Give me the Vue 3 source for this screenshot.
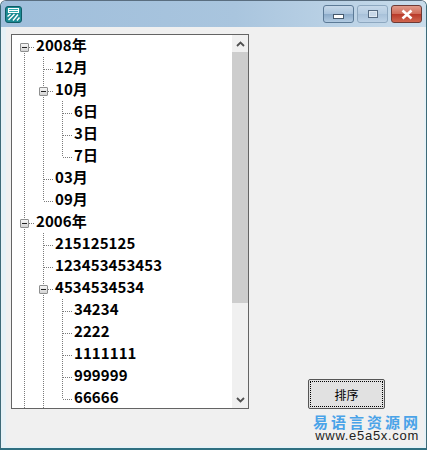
<template>
  <div class="window">
    <!-- Title bar -->
    <div class="titlebar">
      <svg class="app-icon" width="17" height="17" viewBox="0 0 17 17">
        <rect x="0.5" y="0.5" width="16" height="16" rx="2.5" fill="#1c8b93" stroke="#0f5c66" />
        <path d="M3.5 2.5h10v4h-10zM3.5 4.5h10" fill="#35a9ad" stroke="#fff" stroke-width="1.1" />
        <path d="M2.5 10.5l3-2.5M3.5 14l6-6M8 14.5l5-6M12 14.5l2.5-3" fill="none" stroke="#fff" stroke-width="1.4" />
      </svg>
      <div class="caption-btns">
        <div class="cap-btn">
          <span class="min-glyph"></span>
        </div>
        <div class="cap-btn muted">
          <span class="max-glyph"></span>
        </div>
        <div class="cap-btn close">
          <svg width="14" height="11" viewBox="0 0 14 11">
            <path d="M2.5 1.5L11.5 9.5M11.5 1.5L2.5 9.5" stroke="#fff" stroke-width="2.6" />
          </svg>
        </div>
      </div>
    </div>

    <!-- Client area -->
    <div class="client">
      <div class="left-col">
        <div class="tree">
          <div class="tree-rows">
            <div v-for="(row, i) in rows" :key="i" class="row">
              <span v-for="(g, j) in row.guides" :key="j" class="cell" :class="g">
                <span v-if="j === row.guides.length - 1 && row.open" class="toggle"></span>
              </span>
              <span v-if="row.text" class="label">{{ row.text }}</span>
            </div>
          </div>
          <div class="scrollbar">
            <div class="arrow">
              <svg width="9" height="6" viewBox="0 0 9 6"><path d="M1 5L4.5 1.5L8 5" fill="none" stroke="#505050" stroke-width="1.8" /></svg>
            </div>
            <div class="track">
              <div class="thumb"></div>
            </div>
            <div class="arrow">
              <svg width="9" height="6" viewBox="0 0 9 6"><path d="M1 1L4.5 4.5L8 1" fill="none" stroke="#505050" stroke-width="1.8" /></svg>
            </div>
          </div>
        </div>
      </div>
      <div class="right-col">
        <button class="sort-btn"><span class="focus-ring">排序</span></button>
        <div class="brand">
          <div class="brand-cn">易语言资源网</div>
          <div class="brand-url">www.e5a5x.com</div>
        </div>
      </div>
    </div>
  </div>
</template>

<script setup>
// guides: one entry per indent level, the last one holds the connector
const rows = [
  { text: '2008年', guides: ['tee-root'], open: true },
  { text: '12月', guides: ['pass', 'tee'] },
  { text: '10月', guides: ['pass', 'tee'], open: true },
  { text: '6日', guides: ['pass', 'pass', 'tee'] },
  { text: '3日', guides: ['pass', 'pass', 'tee'] },
  { text: '7日', guides: ['pass', 'pass', 'end'] },
  { text: '03月', guides: ['pass', 'tee'] },
  { text: '09月', guides: ['pass', 'end'] },
  { text: '2006年', guides: ['tee'], open: true },
  { text: '215125125', guides: ['pass', 'tee'] },
  { text: '123453453453', guides: ['pass', 'tee'] },
  { text: '4534534534', guides: ['pass', 'tee'], open: true },
  { text: '34234', guides: ['pass', 'pass', 'tee'] },
  { text: '2222', guides: ['pass', 'pass', 'tee'] },
  { text: '1111111', guides: ['pass', 'pass', 'tee'] },
  { text: '999999', guides: ['pass', 'pass', 'tee'] },
  { text: '66666', guides: ['pass', 'pass', 'end'] },
  { text: '', guides: ['pass', 'pass'] },
];
</script>

<style>
html, body {
  margin: 0;
  overflow: hidden;
}
</style>

<style scoped>
.window {
  width: 427px;
  height: 450px;
  box-sizing: border-box;
  display: flex;
  flex-direction: column;
  padding: 0 2px 2px 5px;
  border: 1px solid #3d6a78;
  border-top-color: #5a6e80;
  border-bottom: 2px solid #2f6f80;
  border-radius: 6px 6px 0 0;
  background: #e6f1f6;
  overflow: hidden;
}

.titlebar {
  height: 26px;
  flex: none;
  display: flex;
  align-items: flex-start;
  justify-content: space-between;
  margin: 0 -2px 0 -5px;
  padding: 0 4px 0 4px;
  background: linear-gradient(90deg, #9fbedb 0%, #a9c5de 55%, #c9dceb 100%);
}

.app-icon {
  margin-top: 5px;
}

.caption-btns {
  display: flex;
  gap: 3px;
}

.cap-btn {
  width: 31px;
  height: 18px;
  box-sizing: border-box;
  margin-top: 4px;
  display: flex;
  align-items: center;
  justify-content: center;
  border: 1px solid #5c7a96;
  border-radius: 3px;
  background: linear-gradient(180deg, #c6d8e9 0%, #a9c3dc 50%, #8cabc9 52%, #b2cbe2 100%);
}

.cap-btn.muted {
  border-color: #8ea8c0;
  background: linear-gradient(180deg, #c6d8e9 0%, #b4cbe0 50%, #a8c1d9 52%, #bdd2e6 100%);
}

.cap-btn.close {
  border-color: #6d3a35;
  background: linear-gradient(180deg, #e09a8a 0%, #cf6a57 50%, #b93a2a 52%, #d0664f 100%);
}

.min-glyph {
  width: 9px;
  height: 3px;
  margin-top: 5px;
  background: #fff;
  border: 1px solid #44586c;
}

.max-glyph {
  width: 10px;
  height: 8px;
  box-sizing: border-box;
  border: 1px solid #556a80;
  background: #c8d8e8;
  box-shadow: inset 0 0 0 1px #dfe9f2;
}

.client {
  flex: 1;
  display: flex;
  min-height: 0;
  background: #f0f0f0;
  font-family: "Noto Sans CJK SC", "Noto Sans", sans-serif;
}

.left-col {
  padding: 7px 0 0 5px;
}

.tree {
  width: 238px;
  height: 375px;
  box-sizing: border-box;
  display: flex;
  background: #fff;
  border: 1px solid #646464;
  overflow: hidden;
}

.tree-rows {
  width: 220px;
  box-sizing: border-box;
  flex: none;
  padding: 0 0 0 3px;
  overflow: hidden;
}

.row {
  height: 22px;
  display: flex;
  align-items: flex-start;
  white-space: nowrap;
}

.cell {
  position: relative;
  width: 19px;
  height: 22px;
  flex: none;
}

/* dotted guide lines */
.pass::before,
.tee::before,
.end::before,
.tee-root::before {
  content: "";
  position: absolute;
  left: 9px;
  top: 0;
  bottom: 0;
  width: 1px;
  background: repeating-linear-gradient(180deg, #7a7a7a 0 1px, transparent 1px 2px);
}

.end::before {
  bottom: 10px;
}

.tee-root::before {
  top: 12px;
}

.tee::after,
.end::after,
.tee-root::after {
  content: "";
  position: absolute;
  left: 10px;
  width: 9px;
  top: 12px;
  height: 1px;
  background: repeating-linear-gradient(90deg, #7a7a7a 0 1px, transparent 1px 2px);
}

.toggle {
  position: absolute;
  z-index: 1;
  left: 5px;
  top: 8px;
  width: 9px;
  height: 9px;
  box-sizing: border-box;
  border: 1px solid #8e8f8f;
  border-radius: 1px;
  background: linear-gradient(180deg, #f6f6f6, #d4d4d4);
}

.toggle::after {
  content: "";
  position: absolute;
  left: 1px;
  right: 1px;
  top: 3px;
  height: 1px;
  background: #222;
}

.label {
  margin-left: 2px;
  font-size: 15px;
  font-weight: 700;
  line-height: 19px;
  letter-spacing: 0.08px;
  color: #000;
}

.scrollbar {
  width: 16px;
  flex: none;
  display: flex;
  flex-direction: column;
  background: #f0f0f0;
}

.arrow {
  height: 17px;
  flex: none;
  display: flex;
  align-items: center;
  justify-content: center;
}

.track {
  flex: 1;
}

.thumb {
  height: 251px;
  background: #cdcdcd;
}

.right-col {
  flex: 1;
  display: flex;
  flex-direction: column;
  align-items: flex-end;
  padding-top: 352px;
}

.sort-btn {
  width: 77px;
  height: 30px;
  padding: 1px;
  margin-right: 39px;
  border: 1px solid #555;
  border-radius: 2px;
  background: #e1e1e1;
  font-family: "Noto Sans CJK SC", sans-serif;
  font-size: 12px;
  color: #000;
}

.focus-ring {
  display: flex;
  align-items: center;
  justify-content: center;
  height: 100%;
  box-sizing: border-box;
  border: 1px dotted #000;
}

.brand {
  margin-top: 5px;
  margin-right: 5px;
  text-align: right;
}

.brand-cn {
  margin-right: -2px;
  font-size: 15px;
  font-weight: 700;
  line-height: 15px;
  letter-spacing: 3px;
  color: #4aa3e8;
}

.brand-url {
  font-family: "Liberation Sans", sans-serif;
  font-size: 13px;
  line-height: 13px;
  letter-spacing: 0.7px;
  color: #222;
}
</style>
